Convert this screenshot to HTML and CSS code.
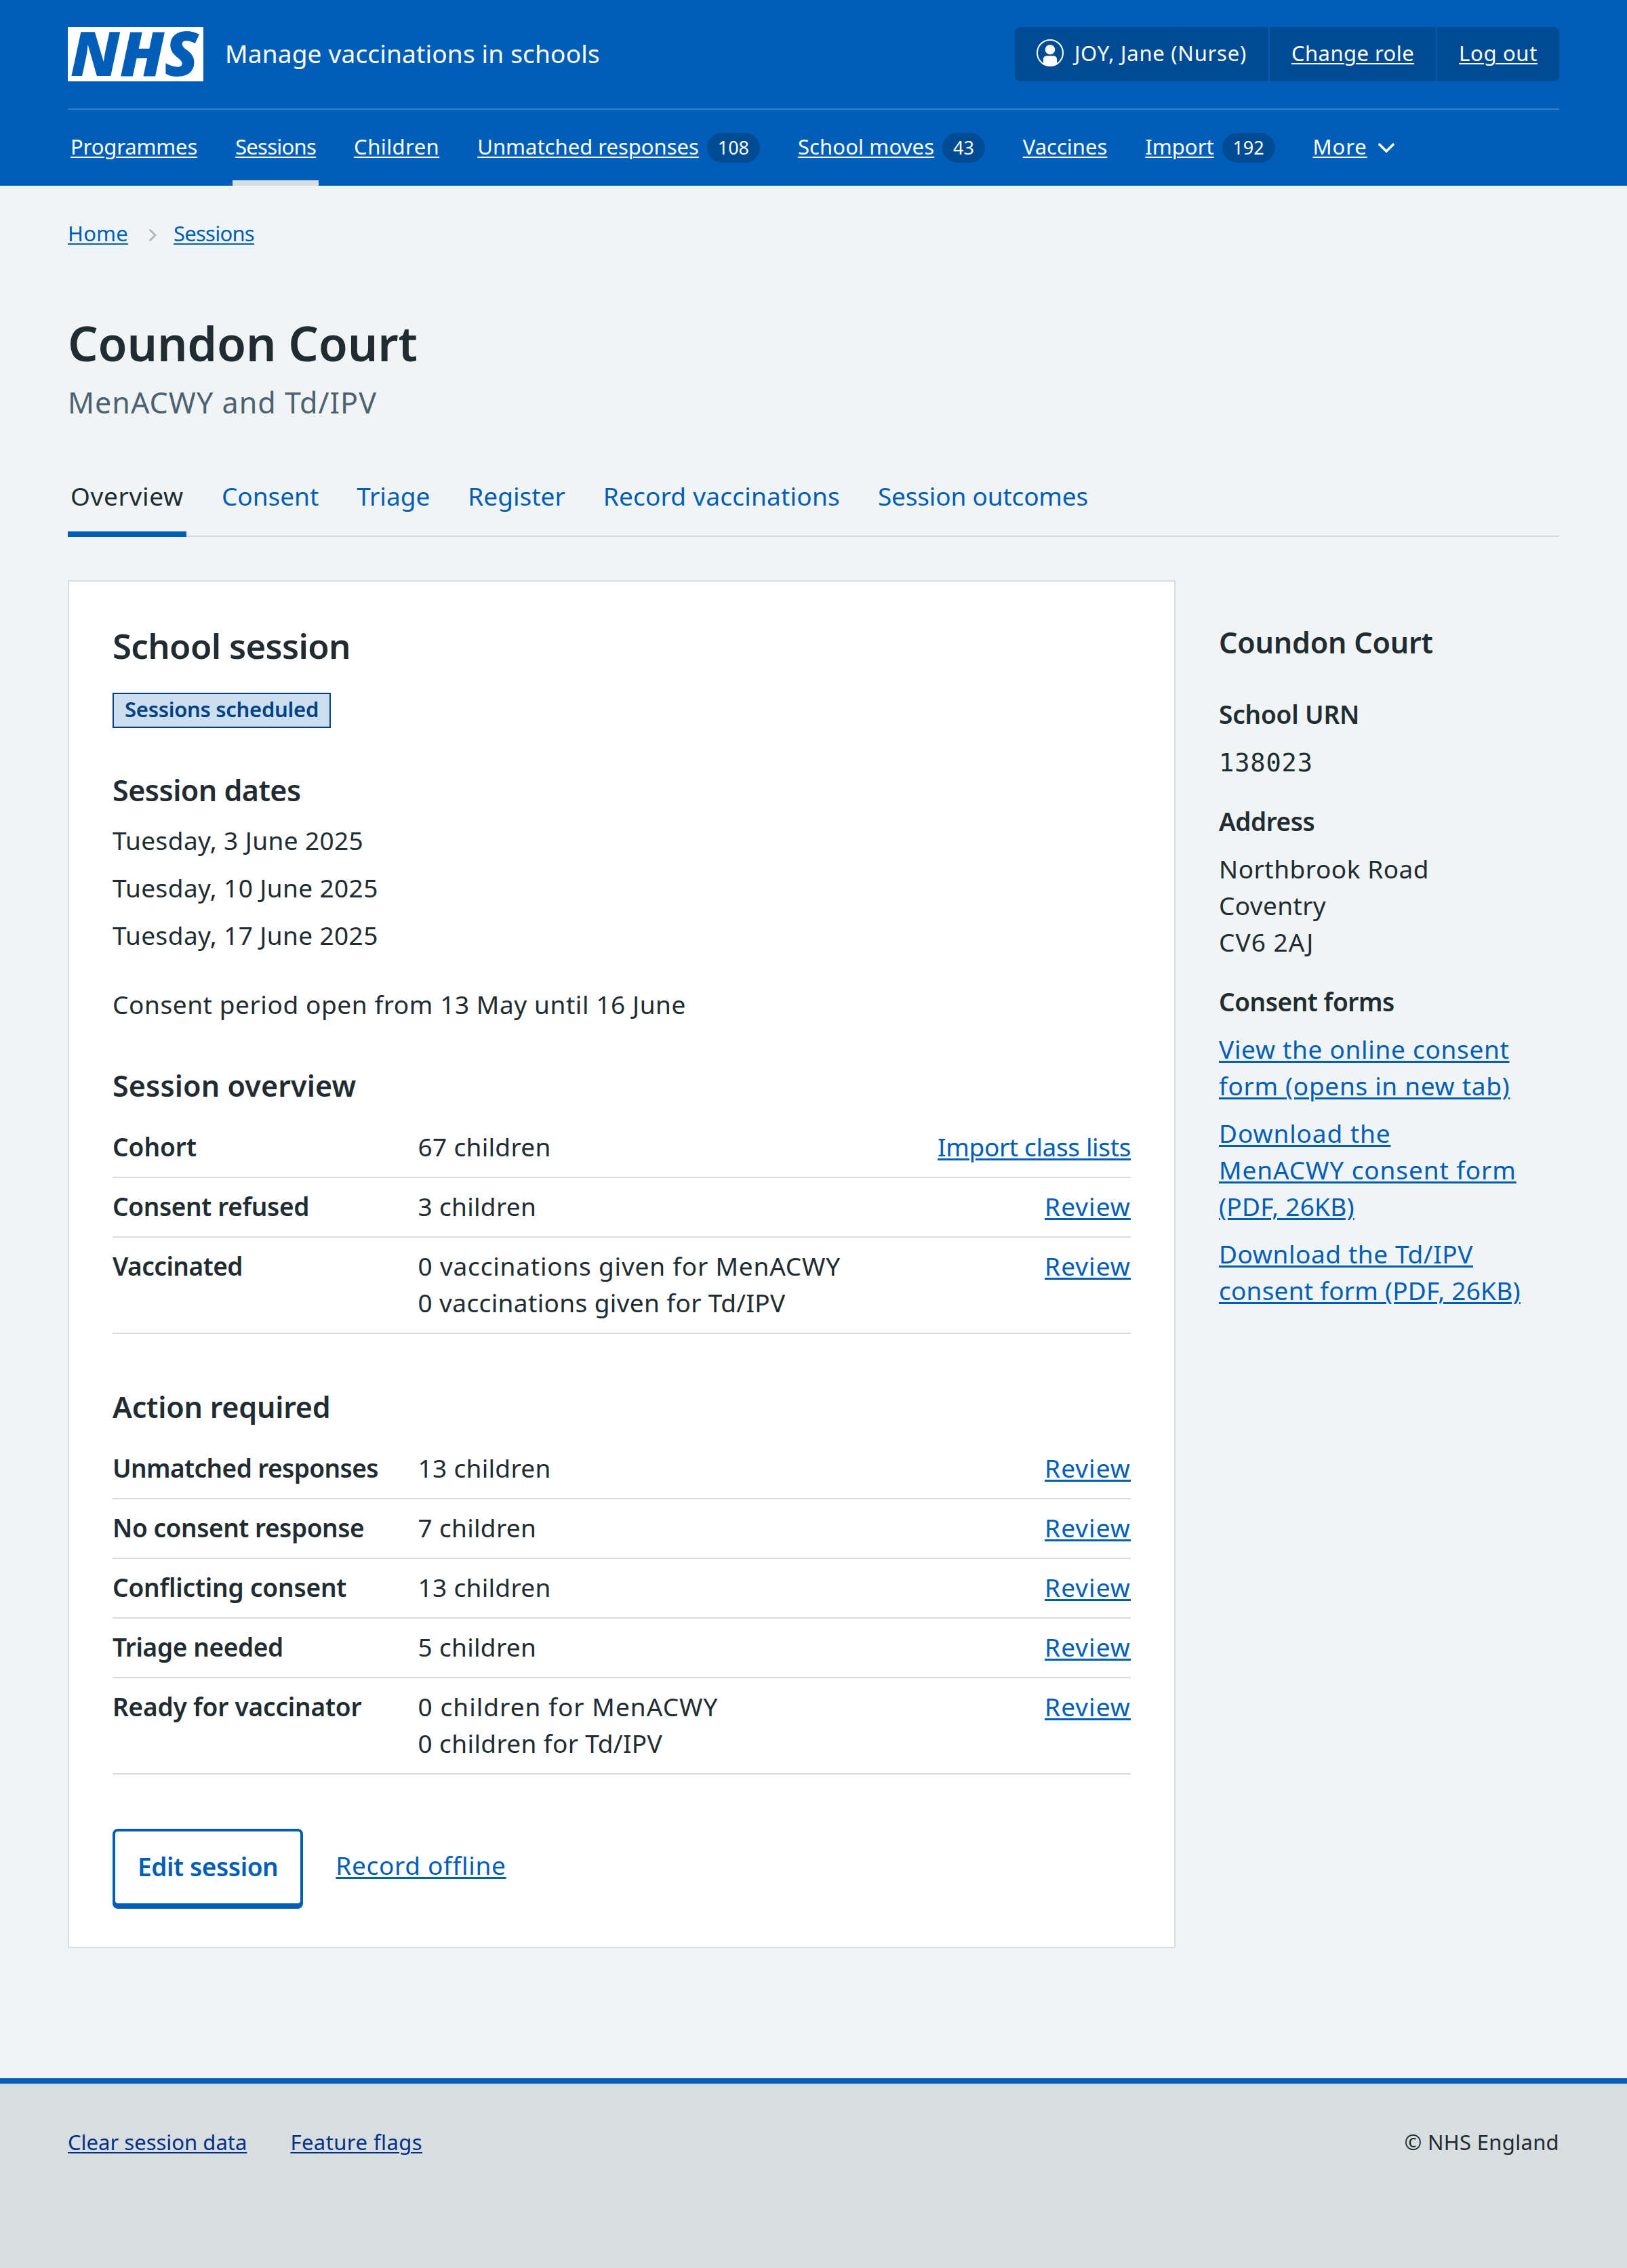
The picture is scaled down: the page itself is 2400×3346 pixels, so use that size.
FILE: index.html
```html
<!DOCTYPE html>
<html lang="en">
<head>
  <meta charset="utf-8">
  <title>Coundon Court – Manage vaccinations in schools</title>
  <link rel="stylesheet" href="styles.css">
</head>
<body>
  <header class="header">
    <div class="header-top">
      <a class="brand" href="#">
        <svg class="logo" viewBox="0 0 200 80" role="img" aria-label="NHS">
          <rect width="200" height="80" fill="#fff"/>
          <text x="4" y="72.3" textLength="189" lengthAdjust="spacingAndGlyphs">NHS</text>
        </svg>
        <span class="service">Manage vaccinations in schools</span>
      </a>
      <ul class="account">
        <li class="account-item">
          <svg class="user-icon" viewBox="0 0 40 40" aria-hidden="true">
            <circle cx="20" cy="20" r="19" fill="none" stroke="#fff" stroke-width="2"/>
            <circle cx="20" cy="15.200" r="7.300" fill="#fff"/>
            <path fill="#fff" d="M10 36.500V29a4.500 4.500 0 0 1 4.500-4.500h11A4.500 4.500 0 0 1 30 29v7.500A19.500 19.500 0 0 1 10 36.500Z"/>
          </svg>
          <span class="t24">JOY, Jane (Nurse)</span>
        </li>
        <li class="account-item"><a class="t14" href="#">Change role</a></li>
        <li class="account-item"><a class="t22" href="#">Log out</a></li>
      </ul>
    </div>
    <nav class="nav">
      <a class="nav-item" href="#"><span class="nav-text tm5">Programmes</span></a>
      <a class="nav-item is-current" href="#"><span class="nav-text tm24">Sessions</span></a>
      <a class="nav-item" href="#"><span class="nav-text t14">Children</span></a>
      <a class="nav-item" href="#"><span class="nav-text">Unmatched responses</span><span class="count">108</span></a>
      <a class="nav-item" href="#"><span class="nav-text t4">School moves</span><span class="count">43</span></a>
      <a class="nav-item" href="#"><span class="nav-text">Vaccines</span></a>
      <a class="nav-item" href="#"><span class="nav-text">Import</span><span class="count">192</span></a>
      <a class="nav-item" href="#"><span class="nav-text t28">More</span>
        <svg class="chevron-down" viewBox="0 0 24 15" aria-hidden="true"><path d="M2 2.200 12 12.200 22 2.200" fill="none" stroke="#fff" stroke-width="3.600" stroke-linecap="round"/></svg>
      </a>
    </nav>
  </header>

  <main class="main">
    <nav class="breadcrumb">
      <a class="t6" href="#">Home</a>
      <svg class="chevron-right" viewBox="0 0 11 18" aria-hidden="true"><path d="M1.500 1.500 9 9 1.500 16.500" fill="none" stroke="#aeb7bd" stroke-width="2.800" stroke-linecap="round"/></svg>
      <a class="tm24" href="#">Sessions</a>
    </nav>

    <h1 class="title">Coundon Court</h1>
    <p class="caption">MenACWY and Td/IPV</p>

    <nav class="tabs">
      <a class="tab is-active t18" href="#">Overview</a>
      <a class="tab" href="#">Consent</a>
      <a class="tab" href="#">Triage</a>
      <a class="tab" href="#">Register</a>
      <a class="tab t6" href="#">Record vaccinations</a>
      <a class="tab tm5" href="#">Session outcomes</a>
    </nav>

    <div class="columns">
      <section class="card">
        <h2 class="heading-m tm14">School session</h2>
        <strong class="tag">Sessions scheduled</strong>

        <h3 class="heading-s dates-heading tm12">Session dates</h3>
        <ul class="dates">
          <li>Tuesday, 3 June 2025</li>
          <li>Tuesday, 10 June 2025</li>
          <li>Tuesday, 17 June 2025</li>
        </ul>
        <p class="period t16">Consent period open from 13 May until 16 June</p>

        <h3 class="heading-s overview-heading t3">Session overview</h3>
        <dl class="summary">
          <div class="row"><dt>Cohort</dt><dd>67 children</dd><dd class="action"><a class="tm10" href="#">Import class lists</a></dd></div>
          <div class="row"><dt class="tm10">Consent refused</dt><dd>3 children</dd><dd class="action"><a class="t28" href="#">Review</a></dd></div>
          <div class="row"><dt class="tm14">Vaccinated</dt><dd><span class="t22">0 vaccinations given for MenACWY</span><br><span class="t10">0 vaccinations given for Td/IPV</span></dd><dd class="action"><a class="t28" href="#">Review</a></dd></div>
        </dl>

        <h3 class="heading-s action-heading tm5">Action required</h3>
        <dl class="summary">
          <div class="row"><dt class="tm16">Unmatched responses</dt><dd>13 children</dd><dd class="action"><a class="t28" href="#">Review</a></dd></div>
          <div class="row"><dt class="tm12">No consent response</dt><dd>7 children</dd><dd class="action"><a class="t28" href="#">Review</a></dd></div>
          <div class="row"><dt class="tm5">Conflicting consent</dt><dd>13 children</dd><dd class="action"><a class="t28" href="#">Review</a></dd></div>
          <div class="row"><dt class="tm10">Triage needed</dt><dd>5 children</dd><dd class="action"><a class="t28" href="#">Review</a></dd></div>
          <div class="row"><dt class="tm5">Ready for vaccinator</dt><dd><span class="t28">0 children for MenACWY</span><br><span class="t10">0 children for Td/IPV</span></dd><dd class="action"><a class="t28" href="#">Review</a></dd></div>
        </dl>

        <div class="buttons">
          <a class="button" href="#">Edit session</a>
          <a class="offline t18" href="#">Record offline</a>
        </div>
      </section>

      <aside class="aside">
        <h2 class="heading-s tm5">Coundon Court</h2>
        <dl class="details">
          <dt class="tm5">School URN</dt>
          <dd class="mono">138023</dd>
          <dt class="tm14">Address</dt>
          <dd><span class="t14">Northbrook Road</span><br><span class="t10">Coventry</span><br><span class="t28">CV6 2AJ</span></dd>
          <dt class="tm12">Consent forms</dt>
          <dd><a class="t18" href="#">View the online consent<br>form (opens in new tab)</a></dd>
          <dd><a href="#"><span class="t24">Download the</span><br><span class="t24">MenACWY consent form</span><br><span class="t6">(PDF, 26KB)</span></a></dd>
          <dd><a href="#"><span class="t16">Download the Td/IPV</span><br><span class="t6">consent form (PDF, 26KB)</span></a></dd>
        </dl>
      </aside>
    </div>
  </main>

  <footer class="footer">
    <nav class="footer-links">
      <a href="#">Clear session data</a>
      <a class="t14" href="#">Feature flags</a>
    </nav>
    <p class="copyright t10">© NHS England</p>
  </footer>
</body>
</html>
```
FILE: styles.css
```css
* {
  box-sizing: border-box;
  margin: 0;
  padding: 0;
}

body {
  background: #f0f4f5;
  color: #212b32;
  font: 400 37px/54px "Noto Sans", "Open Sans", sans-serif;
  min-height: 3346px;
  display: flex;
  flex-direction: column;
}

ul { list-style: none; }

a {
  color: #005eb8;
  text-decoration: underline;
  text-decoration-thickness: 3px;
  text-underline-offset: 3px;
}

/* Tracking, in thousandths of an em */
.t3 { letter-spacing: .003em; }
.t4 { letter-spacing: .004em; }
.t6 { letter-spacing: .006em; }
.t10 { letter-spacing: .01em; }
.t14 { letter-spacing: .014em; }
.t16 { letter-spacing: .0157em; }
.t18 { letter-spacing: .0185em; }
.t22 { letter-spacing: .0215em; }
.t24 { letter-spacing: .024em; }
.t28 { letter-spacing: .028em; }
.tm5 { letter-spacing: -.005em; }
.tm10 { letter-spacing: -.01em; }
.tm12 { letter-spacing: -.012em; }
.tm14 { letter-spacing: -.0135em; }
.tm16 { letter-spacing: -.0156em; }
.tm24 { letter-spacing: -.024em; }

/* Header */
.header {
  background: #005eb8;
  color: #fff;
  height: 274px;
  padding: 40px 100px 0;
}

.header a {
  color: #fff;
  text-decoration-thickness: 2px;
  text-underline-offset: 3px;
}

.header-top {
  display: flex;
  justify-content: space-between;
  height: 122px;
  padding-bottom: 40px;
  border-bottom: 2px solid #337ec6;
}

.header .brand {
  display: flex;
  gap: 32px;
  text-decoration: none;
}

.logo {
  width: 200px;
  height: 80px;
  overflow: visible;
}

.logo text {
  fill: #005eb8;
  font: italic 900 91px "Noto Sans", sans-serif;
}

.service {
  line-height: 77px;
  letter-spacing: .005em;
}

.account {
  display: flex;
  gap: 2px;
  height: 80px;
  border-radius: 8px;
  overflow: hidden;
  font-size: 31px;
}

.account-item {
  display: flex;
  align-items: center;
  gap: 16px;
  padding: 0 32px 4px;
  background: #004b93;
}

.user-icon {
  width: 40px;
  height: 40px;
}

.nav {
  display: flex;
  gap: 48px;
  height: 112px;
  font-size: 31px;
}

.nav-item {
  display: flex;
  align-items: center;
  padding: 0 4px;
}

.header .nav-item { text-decoration: none; }

.nav-text {
  padding-bottom: 4px;
  text-decoration: underline;
  text-decoration-thickness: 2px;
  text-underline-offset: 3px;
}

.is-current { box-shadow: inset 0 -8px #d8dde0; }

.count {
  margin-left: 12px;
  padding: 0 15.800px;
  border-radius: 22px;
  background: #004b93;
  font-size: 27px;
  line-height: 44px;
}

.chevron-down {
  width: 24px;
  height: 15px;
  margin-left: 16px;
}

/* Page */
.main {
  flex: 1;
  padding: 46px 100px 0;
}

.breadcrumb {
  display: flex;
  align-items: center;
  font-size: 31px;
  line-height: 48px;
}

.breadcrumb a,
.footer a {
  text-decoration-thickness: 2px;
  text-underline-offset: 3px;
}

.chevron-right {
  width: 11px;
  height: 18px;
  margin: 5px 25px 0 31px;
}

.title {
  margin-top: 98px;
  font-size: 70px;
  font-weight: 600;
  line-height: 80px;
  letter-spacing: -.003em;
}

.caption {
  margin-top: 18px;
  color: #4c6272;
  font-size: 43px;
  line-height: 60px;
  letter-spacing: .0243em;
}

.tabs {
  display: flex;
  gap: 48px;
  height: 104px;
  margin-top: 64px;
  box-shadow: inset 0 -2px #d8dde0;
}

.tab {
  padding: 17px 4px 0;
  text-decoration: none;
}

.is-active {
  color: #212b32;
  border-bottom: 8px solid #005eb8;
}

.columns {
  display: grid;
  grid-template-columns: 1634px 1fr;
  gap: 64px;
  margin-top: 64px;
}

/* Session card */
.card {
  height: 2018px;
  padding: 62px 64px 0;
  border: 2px solid #d8dde0;
  background: #fff;
}

.heading-m {
  font-size: 51px;
  font-weight: 600;
  line-height: 64px;
}

.heading-s {
  font-size: 43px;
  font-weight: 600;
  line-height: 56px;
}

.tag {
  display: block;
  width: 322px;
  margin-top: 38px;
  padding: 0 16px 4px;
  border: 2px solid #004281;
  background: #ccdff1;
  color: #004281;
  font-size: 31px;
  font-weight: 600;
  line-height: 44px;
  letter-spacing: -.009em;
  white-space: nowrap;
}

.dates-heading { margin-top: 64px; }
.overview-heading { margin-top: 65px; }
.action-heading { margin-top: 80px; }

.dates {
  display: grid;
  gap: 16px;
  margin-top: 19px;
  letter-spacing: .0105em;
}

.period { margin-top: 48px; }

.summary { margin-top: 20px; }

.row {
  display: grid;
  grid-template-columns: 30% 1fr auto;
  padding: 15px 0 17px;
  border-bottom: 2px solid #d8dde0;
}

.row dt,
.details dt { font-weight: 600; }

.row dd { letter-spacing: .008em; }

.buttons {
  display: flex;
  gap: 48px;
  margin-top: 80px;
}

.button {
  height: 114px;
  padding: 0 33px;
  border: 4px solid #005eb8;
  border-radius: 8px;
  box-shadow: 0 4px #005eb8;
  background: #fff;
  font-weight: 600;
  line-height: 104px;
  letter-spacing: -.011em;
  text-decoration: none;
}

.offline { line-height: 107px; }

/* School details */
.aside { padding-top: 64px; }

.details {
  display: grid;
  gap: 16px;
  margin-top: 51px;
}

.details dd + dt { margin-top: 18px; }

.details .mono {
  height: 54px;
  padding-top: 1px;
  font-family: "DejaVu Sans Mono", monospace;
  font-size: 37px;
  line-height: 55px;
  letter-spacing: .85px;
}

/* Footer */
.footer {
  display: flex;
  justify-content: space-between;
  height: 280px;
  padding: 62px 100px 0;
  border-top: 8px solid #005eb8;
  background: #d8dde0;
  font-size: 31px;
  line-height: 48px;
}

.footer-links {
  display: flex;
  gap: 64px;
}

.footer a { color: #003087; }
```
